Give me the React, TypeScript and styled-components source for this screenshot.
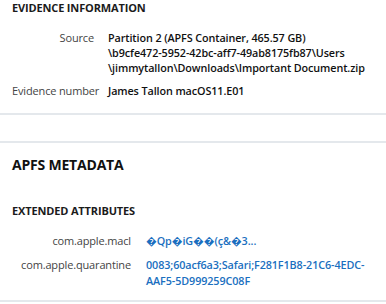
import React from 'react';
import styled, { createGlobalStyle } from 'styled-components';

const GlobalStyle = createGlobalStyle`
  html, body {
    margin: 0;
    padding: 0;
    background: #fff;
  }
  body {
    font-family: "Open Sans", "Noto Sans", sans-serif;
    color: #1b1b1b;
    overflow: hidden;
  }
`;

const Page = styled.div`
  width: 386px;
  height: 304px;
  overflow: hidden;
`;

const Section = styled.section<{ $bottom: number }>`
  padding: 0 0 ${p => p.$bottom}px 12px;
  border-bottom: 2px solid #e4e8ec;
`;

const Spacer = styled.div`
  height: 26px;
  border-bottom: 2px solid #e4e8ec;
`;

const SubHeading = styled.h3<{ $top?: number }>`
  margin: ${p => p.$top ?? 0}px 0 0 0;
  font-size: 11px;
  line-height: 16px;
  font-weight: 700;
  letter-spacing: -0.15px;
  color: #1b1b1b;
`;

const MainHeading = styled.h2`
  margin: 0;
  padding-top: 12px;
  font-size: 14px;
  line-height: 20px;
  font-weight: 700;
  letter-spacing: -0.2px;
  color: #111;
`;

const Props = styled.dl<{ $labelWidth: number; $gap: number; $rowGap: number; $top: number }>`
  margin: ${p => p.$top}px 0 0 0;
  display: grid;
  grid-template-columns: ${p => p.$labelWidth}px 1fr;
  column-gap: ${p => p.$gap}px;
  row-gap: ${p => p.$rowGap}px;
  align-items: start;
`;

const Label = styled.dt`
  margin: 0;
  text-align: right;
  font-size: 11px;
  line-height: 15px;
  color: #444;
  white-space: nowrap;
  letter-spacing: -0.15px;
`;

const Value = styled.dd<{ $link?: boolean }>`
  margin: 0;
  font-size: 10.8px;
  line-height: ${p => (p.$link ? 16 : 15)}px;
  font-weight: 600;
  letter-spacing: -0.1px;
  color: ${p => (p.$link ? '#1a6fc0' : '#111')};
  white-space: nowrap;
  cursor: ${p => (p.$link ? 'pointer' : 'default')};
`;

export default function App() {
  return (
    <Page>
      <GlobalStyle />
      <Section $bottom={15}>
        <SubHeading>EVIDENCE INFORMATION</SubHeading>
        <Props $labelWidth={82} $gap={14} $rowGap={8} $top={14}>
          <Label>Source</Label>
          <Value>
            Partition 2 (APFS Container, 465.57 GB)
            <br />
            \b9cfe472-5952-42bc-aff7-49ab8175fb87\Users
            <br />
            \jimmytallon\Downloads\Important Document.zip
          </Value>
          <Label>Evidence number</Label>
          <Value>James Tallon macOS11.E01</Value>
        </Props>
      </Section>
      <Spacer />
      <Section $bottom={11}>
        <MainHeading>APFS METADATA</MainHeading>
        <SubHeading $top={28}>EXTENDED ATTRIBUTES</SubHeading>
        <Props $labelWidth={119} $gap={15} $rowGap={8} $top={14}>
          <Label>com.apple.macl</Label>
          <Value $link>�Qp�iG��(ç&amp;�3...</Value>
          <Label>com.apple.quarantine</Label>
          <Value $link>
            0083;60acf6a3;Safari;F281F1B8-21C6-4EDC-
            <br />
            AAF5-5D999259C08F
          </Value>
        </Props>
      </Section>
    </Page>
  );
}
